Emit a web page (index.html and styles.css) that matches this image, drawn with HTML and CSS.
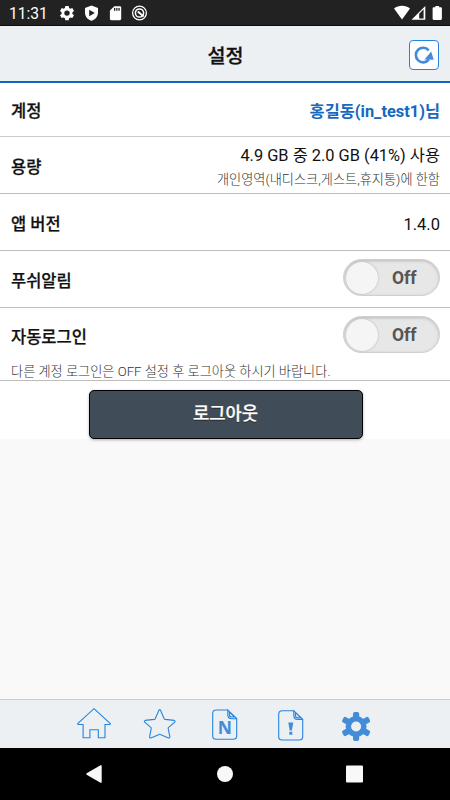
FILE: index.html
```
<!DOCTYPE html>
<html lang="ko">
<head>
<meta charset="utf-8">
<title>설정</title>
<link rel="stylesheet" href="styles.css">
</head>
<body>
<div class="status">
  <span class="clock">11:31</span>
  <svg class="st-icons" width="92" height="26" viewBox="58 0 92 26">
    <g fill="#fff">
      <path fill-rule="evenodd" d="M65.300 6h3.400l.4 2 1.300.8 1.900-.7 1.700 2.900-1.600 1.300v1.600l1.600 1.300-1.700 2.900-1.900-.7-1.300.8-.4 2h-3.400l-.4-2-1.300-.8-1.900.7-1.700-2.900 1.600-1.300v-1.600L60 11l1.700-2.900 1.900.7 1.300-.8zM67 10.400a2.700 2.700 0 1 0 0 5.400 2.700 2.700 0 0 0 0-5.400z"/>
      <path fill-rule="evenodd" d="M91.500 5.400l6.500 2.500v4.600c0 4-2.600 7-6.500 8.300-3.900-1.300-6.500-4.300-6.500-8.300V7.900zM89.200 9.700v6.600l5.600-3.300z"/>
      <path fill-rule="evenodd" d="M114.300 6.200h5.500c.8 0 1.400.6 1.400 1.400v11.200c0 .8-.6 1.400-1.400 1.400h-8.500c-.8 0-1.400-.6-1.400-1.400V10.600zM114 8v2.800h1.300V8zm2.200 0v2.800h1.300V8zm2.200 0v2.800h1.300V8z"/>
    </g>
    <g fill="none" stroke="#fff">
      <circle cx="139.500" cy="13" r="6.900" stroke-width="1.300"/>
      <circle cx="139.500" cy="13" r="4.100" stroke-width="1.500"/>
      <path stroke-width="1.900" d="M137.800 11.600L143.600 16.500"/>
    </g>
  </svg>
  <svg class="sys-icons" width="52" height="26" viewBox="392 0 52 26">
    <g fill="#fff">
      <path d="M394 8.500C398.500 4.900 405.500 4.900 410 8.500L402 19.500z"/>
      <path fill-rule="evenodd" d="M411.500 19.700L425.300 6v13.700zM419.200 13.700v4.800h4.400V9.300z"/>
      <path d="M435.400 6h3.700v1.300h1.500c.8 0 1.300.5 1.300 1.300v10c0 .8-.5 1.300-1.300 1.300h-6.700c-.8 0-1.300-.5-1.300-1.300v-10c0-.8.500-1.300 1.300-1.300h1.500z"/>
    </g>
  </svg>
</div>
<header class="header">
  <h1>설정</h1>
  <button class="refresh" aria-label="새로고침">
    <svg width="28" height="28" viewBox="0 0 28 28">
      <path d="M18.700 9.300A7.300 7.300 0 1 0 18.800 18.700" fill="none" stroke="#438cda" stroke-width="2.600"/>
      <path d="M21.200 10.500L23.700 18.800l-9.200-.3z" fill="#438cda"/>
    </svg>
  </button>
</header>
<main class="list">
  <section class="row account"><h2>계정</h2><strong class="user">홍길동(in_test1)님</strong></section>
  <section class="row"><h2>용량</h2>
    <div class="usage"><p>4.9 GB 중 2.0 GB (41%) 사용</p><small>개인영역(내디스크,게스트,휴지통)에 한함</small></div>
  </section>
  <section class="row"><h2>앱 버전</h2><span class="version">1.4.0</span></section>
  <section class="row"><h2>푸쉬알림</h2><div class="switch"><i></i><span>Off</span></div></section>
  <section class="row auto">
    <div class="line"><h2>자동로그인</h2><div class="switch"><i></i><span>Off</span></div></div>
    <small>다른 계정 로그인은 OFF 설정 후 로그아웃 하시기 바랍니다.</small>
  </section>
  <div class="actions"><button class="logout">로그아웃</button></div>
</main>
<nav class="tabs">
  <svg viewBox="0 0 36 36"><path d="M18 3.700L34.300 18.500q.5 1-.8 1H29V32.700H22.300V24.700H13.900V32.700H7.100V19.500H2.500q-1.300 0-.8-1z"/></svg>
  <svg viewBox="1 0 36 36"><path d="M17.900 5.200q.9-1.200 1.600 0L23.200 13.700q.3.600 1 .7L33.200 15.400q1.500.5.500 1.700L27.600 22.300q-.6.500-.4 1.400L28.900 31.800q0 1.500-1.400 1.100L19.300 29.400q-.6-.3-1.200 0L9.900 32.900q-1.400.4-1.300-1.100L10.200 23.700q.2-.9-.4-1.400L3.700 17.100q-1-1.200.5-1.700L13.200 14.400q.7-.1 1-.7z"/></svg>
  <svg viewBox="0 0 36 36"><path d="M20.800 5H9.300Q5.700 5 5.700 8.500V31Q5.700 34.300 9.300 34.300H26.200Q29.700 34.300 29.700 31V13.500L20.800 5V9.700Q20.800 13.700 24.800 13.700H29.700M22.400 7V10Q22.400 12 24.800 12H27.500z"/><text x="17.800" y="29.200" class="letter">N</text></svg>
  <svg viewBox="0 0 36 36"><path d="M20.800 5.700H9.300Q5.700 5.700 5.700 9.200V31.700Q5.700 35 9.300 35H26.200Q29.700 35 29.700 31.700V14.200L20.800 5.700V10.400Q20.800 14.400 24.800 14.400H29.700M22.400 7.700V10.700Q22.400 12.700 24.800 12.700H27.500z"/><path class="solid" d="M15.300 17.500h5l-1.400 8h-2.200zM16.300 26.700h3v3h-3z"/></svg>
  <svg viewBox="0 0 36 36">
    <g class="solid">
      <rect x="15" y="7" width="6.200" height="29" rx="1.900"/>
      <rect x="15" y="6.300" width="6.200" height="30.400" rx="1.900" transform="rotate(60 18.100 21.500)"/>
      <rect x="15" y="6.300" width="6.200" height="30.400" rx="1.900" transform="rotate(120 18.100 21.500)"/>
      <circle cx="18.100" cy="21.500" r="10.500"/>
    </g>
    <circle class="hole" cx="18.100" cy="21.500" r="5"/>
  </svg>
</nav>
<footer class="system">
  <svg viewBox="0 0 20 20"><path d="M1.700 9.200L15.500 1.300q1.200-.5 1.200.7v16q0 1.200-1.200.7L1.700 10.800q-1-.8 0-1.600z"/></svg>
  <svg viewBox="0 0 20 20"><circle cx="10" cy="10" r="8"/></svg>
  <svg viewBox="0 0 20 20"><rect x="1" y="1.500" width="17" height="17" rx="1"/></svg>
</footer>
</body>
</html>
```
FILE: styles.css
```
* { box-sizing: border-box; }
body, h1, h2, p { margin: 0; }
body {
  width: 450px;
  height: 800px;
  overflow: hidden;
  display: flex;
  flex-direction: column;
  background: #f9f9f9;
  color: #111;
  font-family: Roboto, "Noto Sans CJK KR", sans-serif;
}
svg { display: block; }
.status {
  height: 26px;
  flex: none;
  display: flex;
  align-items: center;
  background: #222;
  border-bottom: 1px solid #0c0c0c;
  color: #fff;
}
.clock { width: 58px; padding-left: 9px; font-size: 15.600px; line-height: 26px; padding-top: 2px; }
.sys-icons { margin-left: auto; margin-right: 6px; }
.header {
  height: 57px;
  flex: none;
  display: grid;
  grid-template-columns: 1fr auto 1fr;
  align-items: center;
  padding: 0 11px;
  background: #ecf0f3;
  border-bottom: 2px solid #0f66c4;
}
.header h1 { grid-column: 2; font-size: 19.600px; line-height: 28px; font-weight: 500; padding: 6px 0 0 1px; -webkit-text-stroke: .3px; }
.refresh {
  justify-self: end;
  width: 30px;
  height: 30px;
  margin-top: 2px;
  padding: 0;
  border: 1px solid #2485df;
  border-radius: 4px;
  background: #fff;
}
.list { background: #fff; }
.row {
  height: 57px;
  display: flex;
  align-items: center;
  justify-content: space-between;
  padding: 0 10px 0 11px;
  border-bottom: 1px solid #bdbdbd;
}
.row.account { height: 54px; border-bottom: 1px solid #ccc; }
.row h2 { font-size: 16.500px; line-height: 24px; font-weight: 500; padding-top: 6px; -webkit-text-stroke: .25px; }
.row.account h2 { padding-top: 4px; }
.user { font-size: 16.400px; line-height: 24px; font-weight: 700; color: #1769be; padding-top: 4px; }
.usage { text-align: right; padding-top: 2px; }
.usage p { font-size: 16.400px; line-height: 26px; }
.row small { display: block; font-size: 13.200px; line-height: 21px; font-weight: 300; color: #333; }
.version { font-size: 16.500px; padding-top: 4px; }
.switch {
  width: 97px;
  height: 37px;
  margin: -3px 0 0;
  display: flex;
  align-items: center;
  padding: 3px 2px;
  border: 1px solid #d0d0d0;
  border-radius: 19px;
  background: #e7e7e7;
  box-shadow: inset 0 1px 3px #b8b8b8;
}
.switch i { width: 32px; height: 32px; border-radius: 50%; background: #f5f5f5; box-shadow: 0 0 2px #aaa; }
.switch span { margin-left: 14px; font-size: 17.500px; font-weight: 700; color: #555; }
.row.auto { height: 73px; display: block; }
.line { height: 54px; display: flex; align-items: center; justify-content: space-between; }
.line .switch { margin-top: -1px; }
.row.auto small { line-height: 19px; }
.actions { height: 58px; padding: 9px 0 0 1px; display: flex; justify-content: center; }
.logout {
  width: 274px;
  height: 49px;
  border: 1px solid #000;
  border-radius: 5px;
  background: #404d58;
  box-shadow: 0 1px 3px rgba(0, 0, 0, .3);
  color: #fff;
  font: 500 17.700px/26px Roboto, "Noto Sans CJK KR", sans-serif;
  -webkit-text-stroke: .25px;
  text-shadow: 0 1px 0 #222;
  padding: 0 0 2px;
}
.tabs {
  height: 49px;
  flex: none;
  margin-top: auto;
  display: grid;
  grid-template-columns: repeat(5, 65.500px);
  justify-content: center;
  justify-items: center;
  align-items: start;
  padding-top: 5px;
  background: #ecf0f3;
  border-top: 1px solid #ccc;
}
.tabs svg { width: 36px; height: 36px; fill: none; stroke: #2485df; stroke-width: 1.100; }
.tabs .solid { fill: #438cda; stroke: none; }
.tabs .hole { fill: #ecf0f3; stroke: none; }
.tabs .letter { font: 700 17.500px "Noto Sans", sans-serif; text-anchor: middle; fill: #438cda; stroke: none; }
.system {
  height: 52px;
  flex: none;
  display: grid;
  grid-template-columns: repeat(3, 130px);
  justify-content: center;
  justify-items: center;
  align-items: center;
  background: #000;
}
.system svg { width: 20px; height: 20px; fill: #f8f8f8; }
```
